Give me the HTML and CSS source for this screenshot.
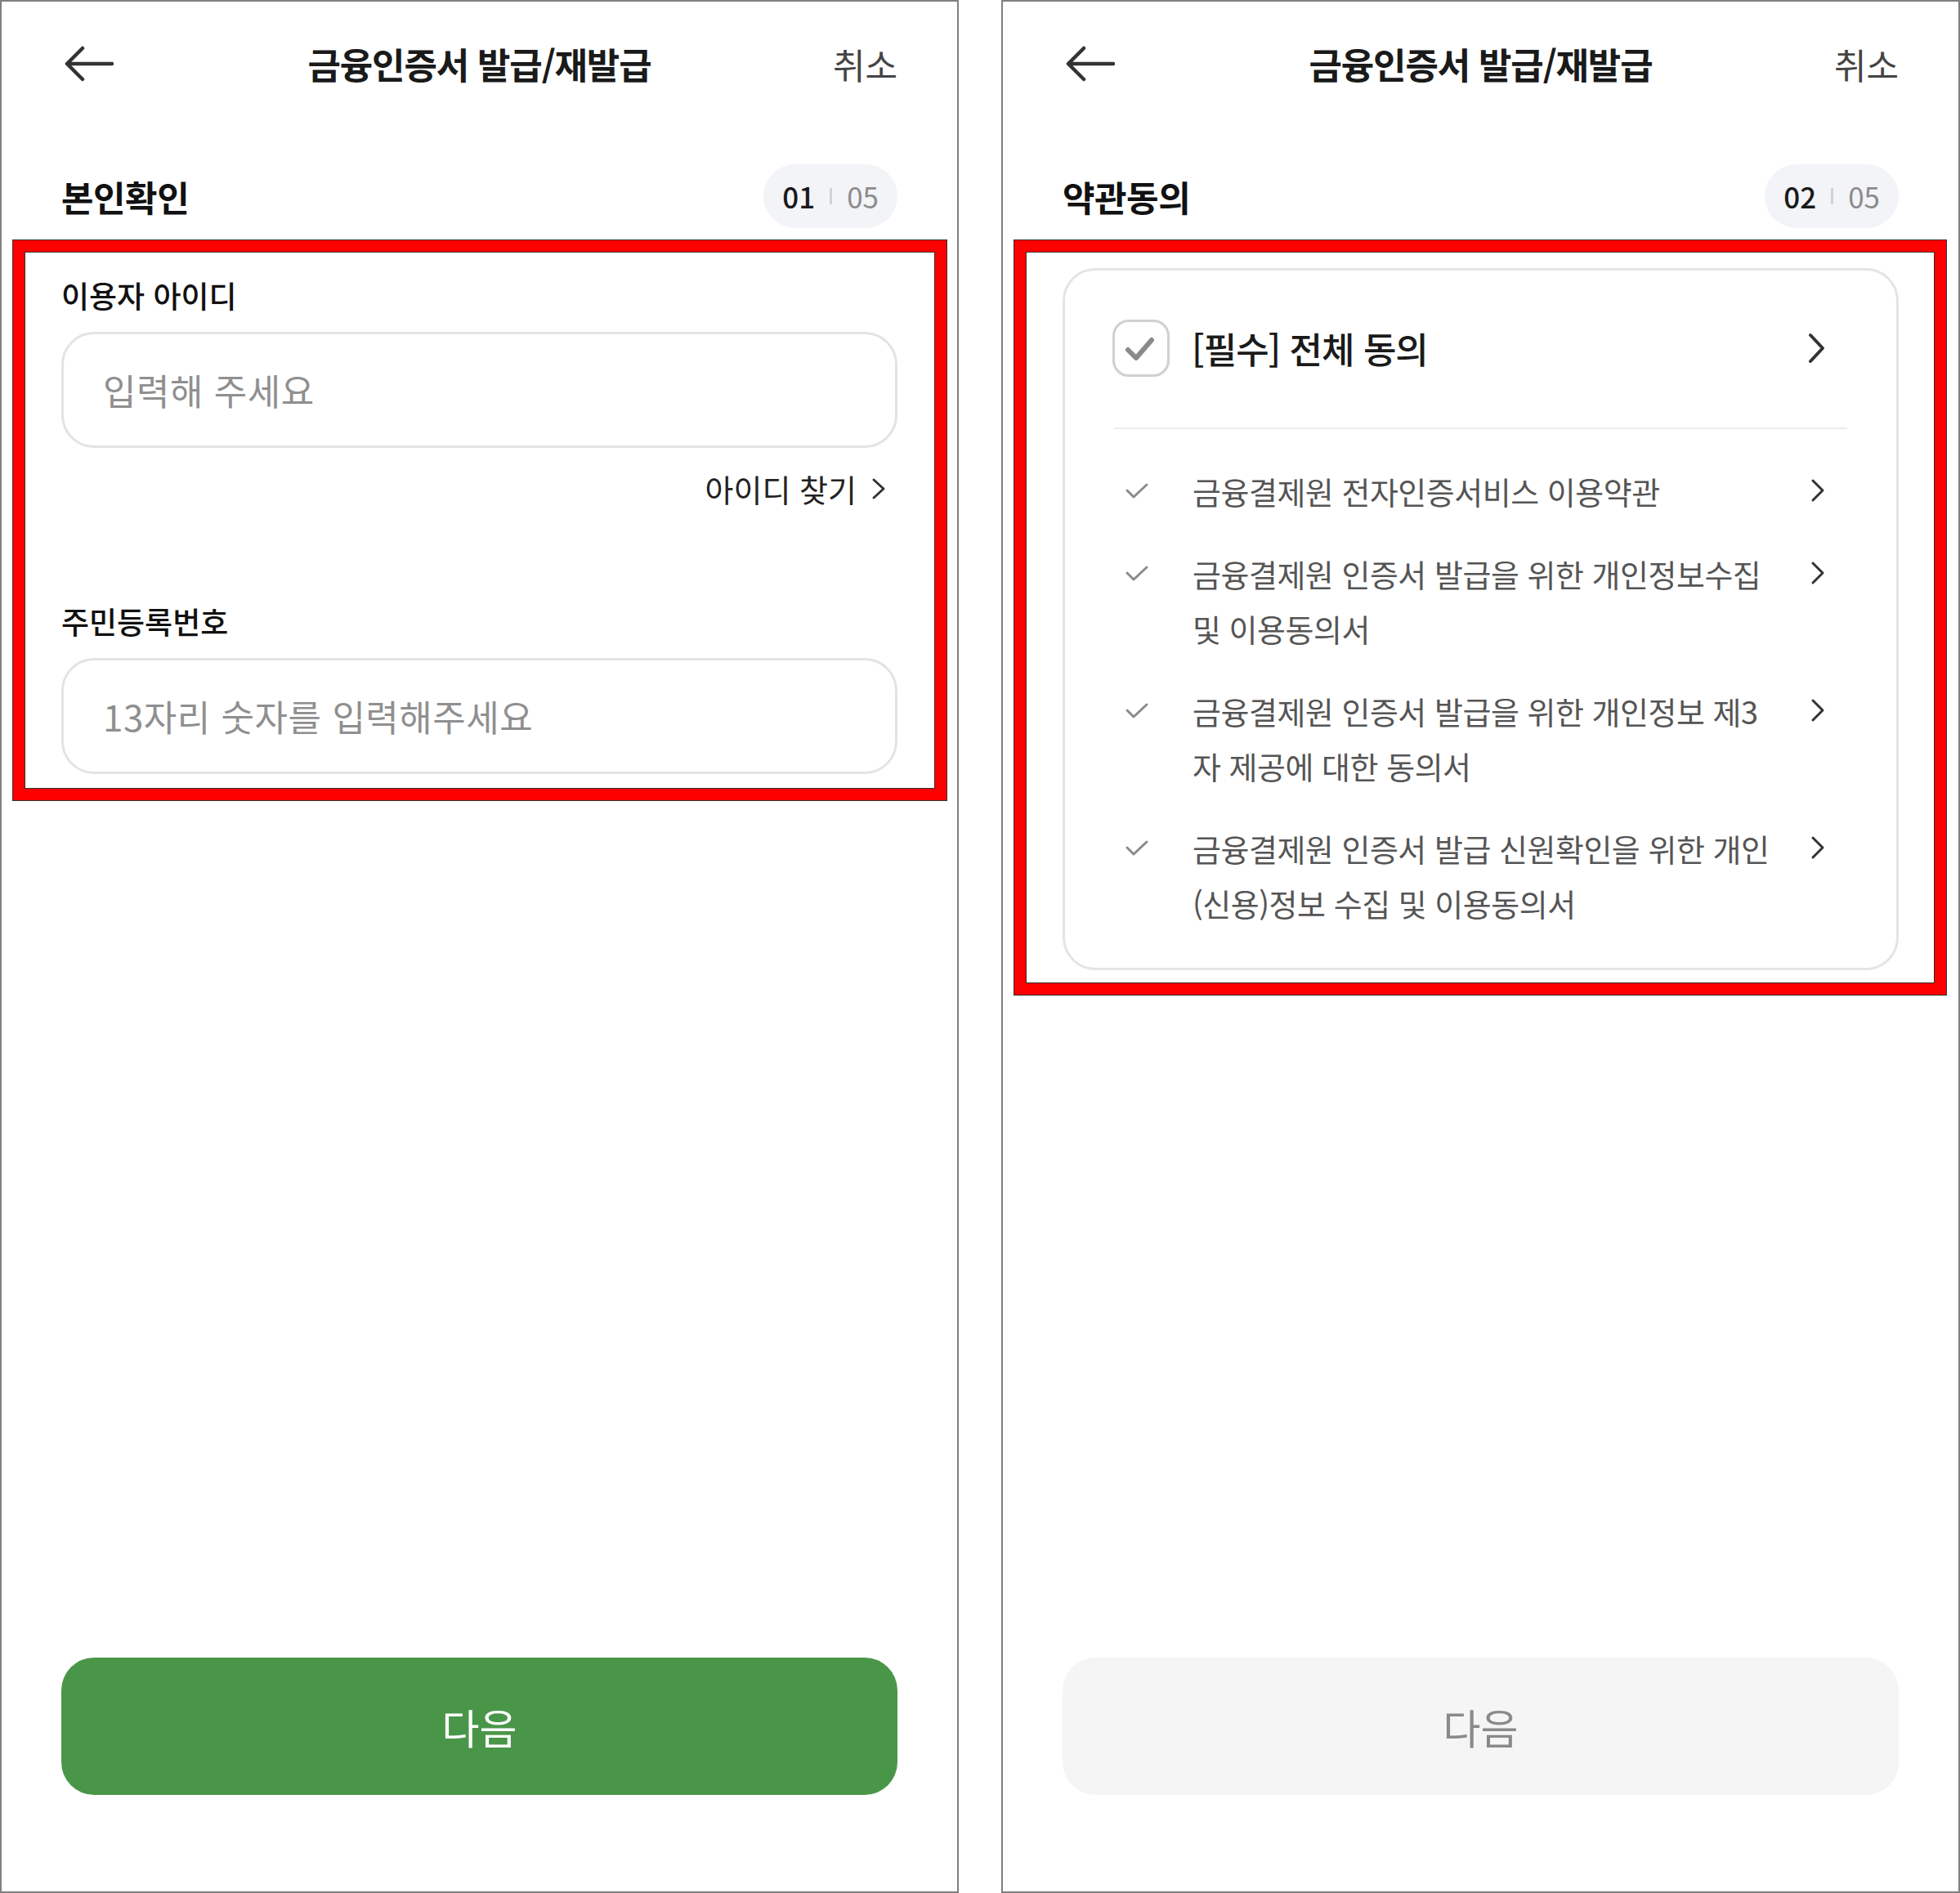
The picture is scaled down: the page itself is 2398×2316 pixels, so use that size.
FILE: index.html
```html
<!DOCTYPE html>
<html lang="ko">
<head>
<meta charset="utf-8">
<title>금융인증서 발급/재발급</title>
<link rel="stylesheet" href="styles.css">
</head>
<body>
<div class="screens">
  <section class="panel">
    <header class="appbar">
      <button class="back" aria-label="뒤로">
        <svg width="62" height="44" viewBox="0 0 62 44"><path d="M60 22 H5 M24 3 L5 22 L24 41" fill="none" stroke="#333" stroke-width="4.5" stroke-linecap="round" stroke-linejoin="round"/></svg>
      </button>
      <h1 class="appbar-title">금융인증서 발급/재발급</h1>
      <span class="cancel">취소</span>
    </header>
    <div class="step-row">
      <h2 class="step-title">본인확인</h2>
      <div class="step-pill"><span class="cur">01</span><span class="sep"></span><span class="total">05</span></div>
    </div>
    <label class="field-label first">이용자 아이디</label>
    <input class="field-input" type="text" placeholder="입력해 주세요">
    <div class="find-row">
      <span class="find-link">아이디 찾기
        <svg width="18" height="28" viewBox="0 0 18 28"><path d="M3 3 L15 14 L3 25" fill="none" stroke="#333" stroke-width="3" stroke-linecap="round" stroke-linejoin="round"/></svg>
      </span>
    </div>
    <label class="field-label second">주민등록번호</label>
    <input class="field-input" type="text" placeholder="13자리 숫자를 입력해주세요">
    <button class="next-btn active">다음</button>
    <div class="annot annot-left"></div>
  </section>

  <section class="panel">
    <header class="appbar">
      <button class="back" aria-label="뒤로">
        <svg width="62" height="44" viewBox="0 0 62 44"><path d="M60 22 H5 M24 3 L5 22 L24 41" fill="none" stroke="#333" stroke-width="4.5" stroke-linecap="round" stroke-linejoin="round"/></svg>
      </button>
      <h1 class="appbar-title">금융인증서 발급/재발급</h1>
      <span class="cancel">취소</span>
    </header>
    <div class="step-row">
      <h2 class="step-title">약관동의</h2>
      <div class="step-pill"><span class="cur">02</span><span class="sep"></span><span class="total">05</span></div>
    </div>
    <div class="terms-card">
      <div class="terms-all">
        <span class="checkbox">
          <svg width="70" height="70" viewBox="0 0 70 70"><path d="M19 37 L29 47 L48 25" fill="none" stroke="#8a8a8a" stroke-width="6" stroke-linecap="round" stroke-linejoin="round"/></svg>
        </span>
        <span class="terms-all-text">[필수] 전체 동의</span>
        <svg class="chev-big" width="24" height="38" viewBox="0 0 24 38"><path d="M4 3 L19 19 L4 35" fill="none" stroke="#333" stroke-width="4" stroke-linecap="round" stroke-linejoin="round"/></svg>
      </div>
      <div class="terms-divider"></div>
      <ul class="terms-list">
        <li class="term">
          <span class="term-check"><svg width="30" height="22" viewBox="0 0 30 22"><path d="M3 10 L11 18 L27 3" fill="none" stroke="#8a8a8a" stroke-width="3" stroke-linecap="round" stroke-linejoin="round"/></svg></span>
          <span class="term-text">금융결제원 전자인증서비스 이용약관</span>
          <svg class="chev" width="20" height="30" viewBox="0 0 20 30"><path d="M4 3 L16 15 L4 27" fill="none" stroke="#333" stroke-width="3" stroke-linecap="round" stroke-linejoin="round"/></svg>
        </li>
        <li class="term">
          <span class="term-check"><svg width="30" height="22" viewBox="0 0 30 22"><path d="M3 10 L11 18 L27 3" fill="none" stroke="#8a8a8a" stroke-width="3" stroke-linecap="round" stroke-linejoin="round"/></svg></span>
          <span class="term-text">금융결제원 인증서 발급을 위한 개인정보수집<br>및 이용동의서</span>
          <svg class="chev" width="20" height="30" viewBox="0 0 20 30"><path d="M4 3 L16 15 L4 27" fill="none" stroke="#333" stroke-width="3" stroke-linecap="round" stroke-linejoin="round"/></svg>
        </li>
        <li class="term">
          <span class="term-check"><svg width="30" height="22" viewBox="0 0 30 22"><path d="M3 10 L11 18 L27 3" fill="none" stroke="#8a8a8a" stroke-width="3" stroke-linecap="round" stroke-linejoin="round"/></svg></span>
          <span class="term-text">금융결제원 인증서 발급을 위한 개인정보 제3<br>자 제공에 대한 동의서</span>
          <svg class="chev" width="20" height="30" viewBox="0 0 20 30"><path d="M4 3 L16 15 L4 27" fill="none" stroke="#333" stroke-width="3" stroke-linecap="round" stroke-linejoin="round"/></svg>
        </li>
        <li class="term">
          <span class="term-check"><svg width="30" height="22" viewBox="0 0 30 22"><path d="M3 10 L11 18 L27 3" fill="none" stroke="#8a8a8a" stroke-width="3" stroke-linecap="round" stroke-linejoin="round"/></svg></span>
          <span class="term-text">금융결제원 인증서 발급 신원확인을 위한 개인<br>(신용)정보 수집 및 이용동의서</span>
          <svg class="chev" width="20" height="30" viewBox="0 0 20 30"><path d="M4 3 L16 15 L4 27" fill="none" stroke="#333" stroke-width="3" stroke-linecap="round" stroke-linejoin="round"/></svg>
        </li>
      </ul>
    </div>
    <button class="next-btn disabled">다음</button>
    <div class="annot annot-right"></div>
  </section>
</div>
</body>
</html>
```

FILE: styles.css
```css
* { box-sizing: border-box; }

html, body {
  margin: 0;
  padding: 0;
  background: #ffffff;
}

body {
  width: 2398px;
  height: 2316px;
  overflow: hidden;
  font-family: "Noto Sans CJK KR", "Noto Sans", sans-serif;
  color: #111;
}

.screens {
  display: flex;
  gap: 52px;
  width: 2398px;
  height: 2316px;
}

.panel {
  position: relative;
  width: 1173px;
  height: 2316px;
  border: 2px solid #808080;
  display: flex;
  flex-direction: column;
  padding: 0 73px;
}

.appbar {
  height: 152px;
  display: grid;
  grid-template-columns: 1fr auto 1fr;
  align-items: center;
}

.back {
  justify-self: start;
  border: 0;
  background: none;
  padding: 0 0 0 2px;
  margin: 0;
  display: flex;
  align-items: center;
  height: 44px;
}

.appbar-title {
  margin: 0;
  font-size: 44px;
  font-weight: 700;
  letter-spacing: -1.2px;
  color: #1a1a1a;
  line-height: 60px;
}

.cancel {
  justify-self: end;
  font-size: 43px;
  letter-spacing: 0;
  color: #444;
  line-height: 60px;
}

.step-row {
  margin-top: 47px;
  height: 78px;
  display: flex;
  align-items: center;
  justify-content: space-between;
}

.step-title {
  margin: 0;
  font-size: 43px;
  font-weight: 700;
  letter-spacing: -0.5px;
  color: #111;
  line-height: 56px;
}

.step-pill {
  height: 78px;
  padding: 0 23px;
  border-radius: 39px;
  background: #f3f4f7;
  display: flex;
  align-items: center;
  gap: 18px;
  font-size: 35px;
  line-height: 40px;
}

.step-pill .cur {
  color: #1a1a1a;
  font-weight: 500;
}

.step-pill .sep {
  width: 3px;
  height: 20px;
  background: #d2d2d2;
}

.step-pill .total {
  color: #8c8c8c;
}

.field-label {
  display: block;
  font-size: 37px;
  font-weight: 500;
  letter-spacing: 0;
  line-height: 50px;
  color: #111;
}

.field-label.first { margin-top: 57px; }
.field-label.second { margin-top: 111px; }

.field-input {
  display: block;
  margin-top: 20px;
  width: 100%;
  height: 142px;
  border: 3px solid #e3e3e3;
  border-radius: 40px;
  padding: 0 0 0 48px;
  font-family: "Noto Sans CJK KR", "Noto Sans", sans-serif;
  font-size: 44px;
  letter-spacing: 0.5px;
  color: #111;
  background: #fff;
  outline: none;
}

.field-input::placeholder {
  color: #8f8f8f;
}

.find-row {
  margin-top: 24px;
  display: flex;
  justify-content: flex-end;
  padding-right: 14px;
}

.find-link {
  display: flex;
  align-items: center;
  gap: 18px;
  font-size: 38px;
  letter-spacing: 0;
  line-height: 52px;
  color: #222;
}

.next-btn {
  margin-top: auto;
  margin-bottom: 118px;
  width: 100%;
  height: 168px;
  border: 0;
  border-radius: 40px;
  font-family: "Noto Sans CJK KR", "Noto Sans", sans-serif;
  font-size: 50px;
  letter-spacing: 0;
}

.next-btn.active {
  background: #4a9648;
  color: #fff;
}

.next-btn.disabled {
  background: #f5f5f5;
  color: #8a8a8a;
}

.terms-card {
  margin-top: 49px;
  border: 3px solid #e4e4e4;
  border-radius: 40px;
  padding: 60px 60px 46px 58px;
}

.terms-all {
  display: flex;
  align-items: center;
  height: 70px;
}

.checkbox {
  width: 70px;
  height: 70px;
  flex: none;
  border: 3px solid #d0d0d0;
  border-radius: 20px;
  display: flex;
  align-items: center;
  justify-content: center;
}

.checkbox svg {
  margin: -3px;
}

.terms-all-text {
  margin-left: 27px;
  flex: 1;
  font-size: 44px;
  font-weight: 500;
  letter-spacing: -1px;
  color: #1a1a1a;
  line-height: 60px;
}

.chev-big {
  flex: none;
  margin-right: 25px;
}

.terms-divider {
  margin-top: 62px;
  margin-left: 2px;
  height: 2px;
  background: #ececec;
}

.terms-list {
  list-style: none;
  margin: 42px 0 0 0;
  padding: 0;
  display: flex;
  flex-direction: column;
  gap: 34px;
}

.term {
  display: flex;
  align-items: flex-start;
}

.term-check {
  flex: none;
  width: 98px;
  height: 67px;
  display: flex;
  align-items: center;
  padding-left: 15px;
}

.term-text {
  flex: 1;
  font-size: 38px;
  letter-spacing: -0.5px;
  line-height: 67px;
  color: #555;
}

.chev {
  flex: none;
  margin-top: 18px;
  margin-right: 26px;
}

.annot {
  position: absolute;
  top: 292px;
  left: 14px;
  border: 14px solid #ff0000;
  box-shadow: 0 0 0 1px #333, inset 0 0 0 1px #333;
  pointer-events: none;
}

.annot-left {
  width: 1142px;
  height: 685px;
}

.annot-right {
  width: 1140px;
  height: 923px;
}
```
